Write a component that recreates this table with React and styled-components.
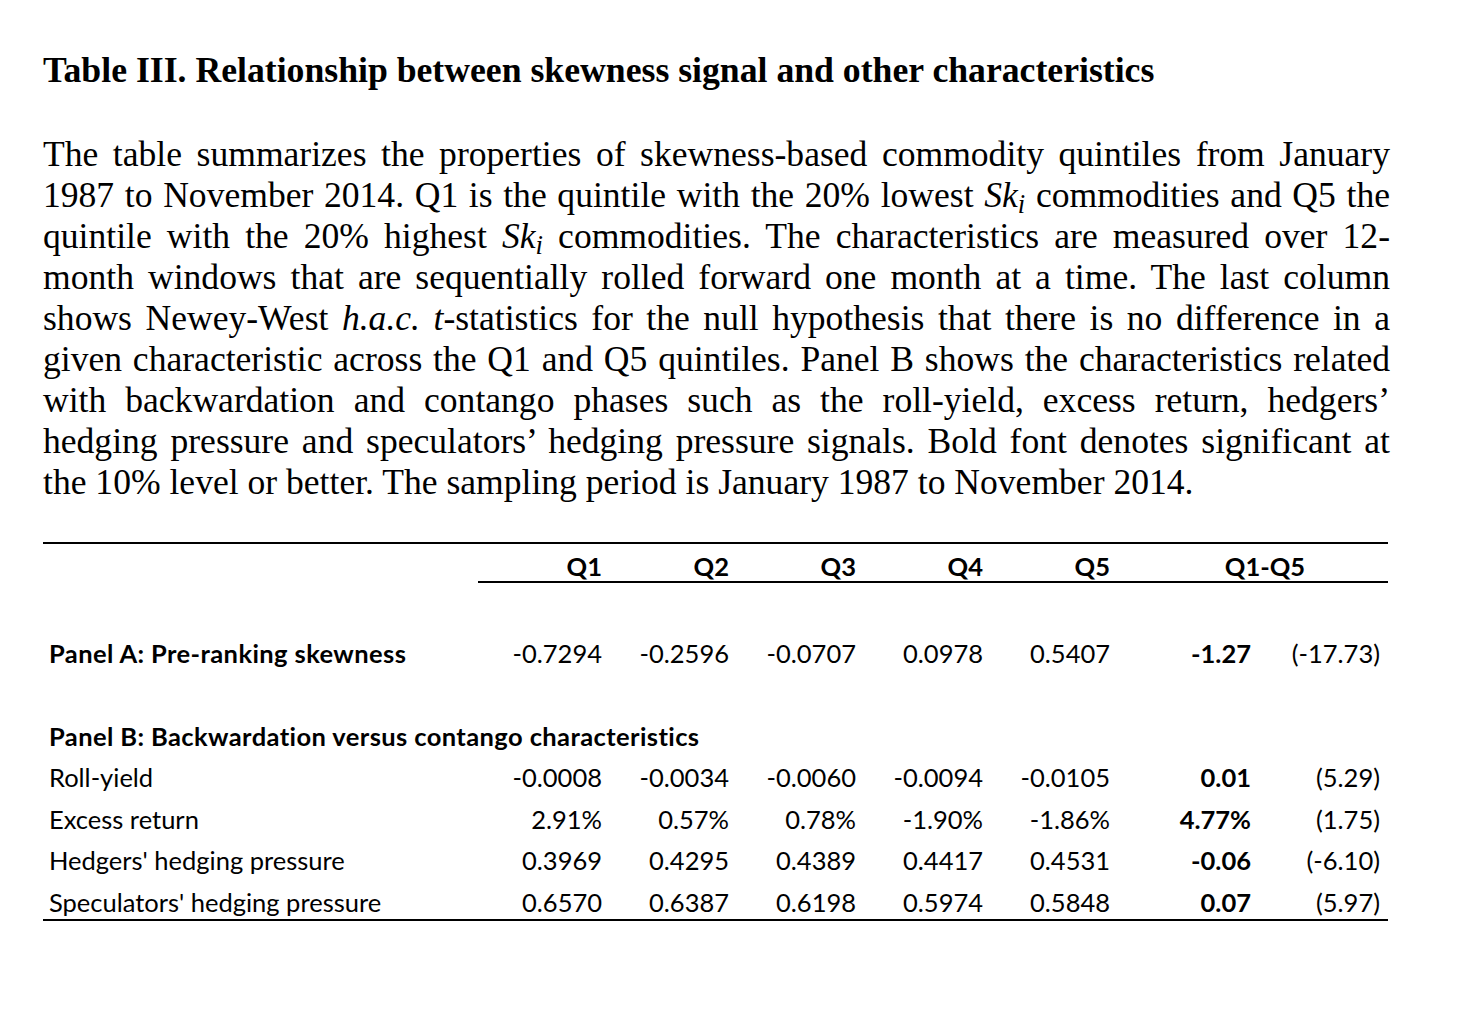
import React from "react";
import styled, { createGlobalStyle } from "styled-components";

const Global = createGlobalStyle`
  html, body { margin: 0; padding: 0; background: #fff; }
  body { color: #000; }
`;

const Page = styled.div`
  width: 1458px;
  box-sizing: border-box;
  padding: 50px 70px 0 43px;
`;

const Title = styled.h1`
  margin: 0;
  font-family: "Liberation Serif", "Times New Roman", serif;
  font-weight: 700;
  font-size: 35.7px;
  line-height: 40px;
`;

const Para = styled.div`
  margin-top: 44px;
  font-family: "Liberation Serif", "Times New Roman", serif;
  font-size: 35.6px;
  line-height: 41px;
  width: 1347px;
`;

const Line = styled.span`
  display: block;
  text-align: ${(p) => (p.$last ? "left" : "justify")};
  text-align-last: ${(p) => (p.$last ? "left" : "justify")};
  white-space: nowrap;
`;

const MathVar = styled.i`
  font-family: "Liberation Serif", "Times New Roman", serif;
`;

const Sub = styled.sub`
  font-size: 0.75em;
  vertical-align: -0.22em;
  line-height: 0;
`;

const Table = styled.div`
  margin-top: 39px;
  width: 1345px;
  display: grid;
  grid-template-columns: 435px 124px repeat(4, 127px) 141px 137px;
  font-family: Lato, "Open Sans", sans-serif;
  font-size: 25.5px;
  border-top: 2px solid #000;
  border-bottom: 2px solid #000;
`;

const HeadCell = styled.div`
  font-weight: 700;
  text-align: ${(p) => p.$align || "right"};
  line-height: 28px;
  padding: 8px 0 1px;
  border-bottom: ${(p) => (p.$rule ? "2px solid #000" : "none")};
  grid-column: ${(p) => p.$span || "auto"};
  padding-left: ${(p) => p.$pl || 0}px;
`;

const Cell = styled.div`
  text-align: ${(p) => p.$align || "right"};
  font-weight: ${(p) => (p.$bold ? 700 : 400)};
  letter-spacing: ${(p) => (p.$bold && p.$align === "left" ? "0.4px" : "0")};
  line-height: 33px;
  padding-top: 8.5px;
  padding-left: ${(p) => (p.$align === "left" ? 6 : 0)}px;
  padding-right: ${(p) => p.$pr || 0}px;
  grid-column: ${(p) => p.$span || "auto"};
  white-space: nowrap;
`;

const Spacer = styled.div`
  grid-column: 1 / -1;
  height: ${(p) => p.$h}px;
`;

const rowsB = [
  ["Roll-yield", "-0.0008", "-0.0034", "-0.0060", "-0.0094", "-0.0105", "0.01", "(5.29)"],
  ["Excess return", "2.91%", "0.57%", "0.78%", "-1.90%", "-1.86%", "4.77%", "(1.75)"],
  ["Hedgers' hedging pressure", "0.3969", "0.4295", "0.4389", "0.4417", "0.4531", "-0.06", "(-6.10)"],
  ["Speculators' hedging pressure", "0.6570", "0.6387", "0.6198", "0.5974", "0.5848", "0.07", "(5.97)"],
];

function DataRow({ r }) {
  return (
    <>
      <Cell $align="left">{r[0]}</Cell>
      {r.slice(1, 6).map((v, i) => (
        <Cell key={i}>{v}</Cell>
      ))}
      <Cell $bold>{r[6]}</Cell>
      <Cell $pr={8}>{r[7]}</Cell>
    </>
  );
}

const Sk = () => (
  <MathVar>
    Sk<Sub>i</Sub>
  </MathVar>
);

export default function App() {
  return (
    <Page>
      <Global />
      <Title>Table III. Relationship between skewness signal and other characteristics</Title>
      <Para>
        <Line>The table summarizes the properties of skewness-based commodity quintiles from January</Line>
        <Line>
          1987 to November 2014. Q1 is the quintile with the 20% lowest <Sk /> commodities and Q5 the
        </Line>
        <Line>
          quintile with the 20% highest <Sk /> commodities. The characteristics are measured over 12-
        </Line>
        <Line>month windows that are sequentially rolled forward one month at a time. The last column</Line>
        <Line>
          shows Newey-West <i>h.a.c.</i> <i>t</i>-statistics for the null hypothesis that there is no difference in a
        </Line>
        <Line>given characteristic across the Q1 and Q5 quintiles. Panel B shows the characteristics related</Line>
        <Line>with backwardation and contango phases such as the roll-yield, excess return, hedgers’</Line>
        <Line>hedging pressure and speculators’ hedging pressure signals. Bold font denotes significant at</Line>
        <Line $last>the 10% level or better. The sampling period is January 1987 to November 2014.</Line>
      </Para>
      <Table>
        <HeadCell />
        <HeadCell $rule>Q1</HeadCell>
        <HeadCell $rule>Q2</HeadCell>
        <HeadCell $rule>Q3</HeadCell>
        <HeadCell $rule>Q4</HeadCell>
        <HeadCell $rule>Q5</HeadCell>
        <HeadCell $rule $span="span 2" $align="center" $pl={32}>Q1-Q5</HeadCell>
        <Spacer $h={45} />
        <Cell $align="left" $bold>Panel A: Pre-ranking skewness</Cell>
        <Cell>-0.7294</Cell>
        <Cell>-0.2596</Cell>
        <Cell>-0.0707</Cell>
        <Cell>0.0978</Cell>
        <Cell>0.5407</Cell>
        <Cell $bold>-1.27</Cell>
        <Cell $pr={8}>(-17.73)</Cell>
        <Spacer $h={41.5} />
        <Cell $align="left" $bold $span="1 / -1">Panel B: Backwardation versus contango characteristics</Cell>
        {rowsB.map((r, i) => (
          <DataRow key={i} r={r} />
        ))}
      </Table>
    </Page>
  );
}
